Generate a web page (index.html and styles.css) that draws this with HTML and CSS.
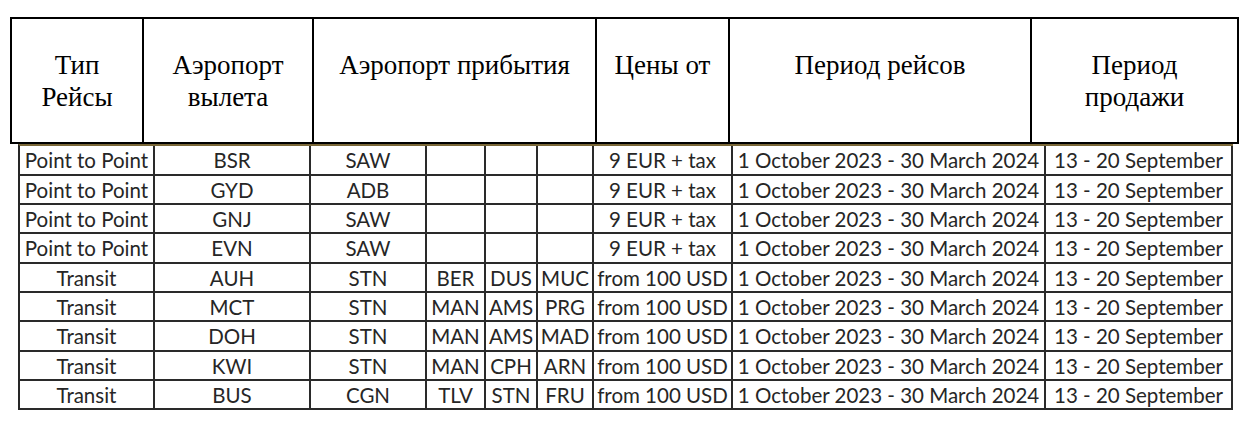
FILE: index.html
```html
<!DOCTYPE html>
<html lang="ru">
<head>
<meta charset="utf-8">
<title>Рейсы</title>
<link rel="stylesheet" href="styles.css">
</head>
<body>
<div class="sheet">
  <div class="head">
    <div class="hc">Тип<br>Рейсы</div>
    <div class="hc">Аэропорт<br>вылета</div>
    <div class="hc">Аэропорт прибытия</div>
    <div class="hc">Цены от</div>
    <div class="hc">Период рейсов</div>
    <div class="hc">Период<br>продажи</div>
  </div>
  <div class="grid">
    <div class="c">Point to Point</div><div class="c">BSR</div><div class="c">SAW</div><div class="c"></div><div class="c"></div><div class="c"></div><div class="c">9 EUR + tax</div><div class="c">1 October 2023 - 30 March 2024</div><div class="c">13 - 20 September</div>
    <div class="c">Point to Point</div><div class="c">GYD</div><div class="c">ADB</div><div class="c"></div><div class="c"></div><div class="c"></div><div class="c">9 EUR + tax</div><div class="c">1 October 2023 - 30 March 2024</div><div class="c">13 - 20 September</div>
    <div class="c">Point to Point</div><div class="c">GNJ</div><div class="c">SAW</div><div class="c"></div><div class="c"></div><div class="c"></div><div class="c">9 EUR + tax</div><div class="c">1 October 2023 - 30 March 2024</div><div class="c">13 - 20 September</div>
    <div class="c">Point to Point</div><div class="c">EVN</div><div class="c">SAW</div><div class="c"></div><div class="c"></div><div class="c"></div><div class="c">9 EUR + tax</div><div class="c">1 October 2023 - 30 March 2024</div><div class="c">13 - 20 September</div>
    <div class="c">Transit</div><div class="c">AUH</div><div class="c">STN</div><div class="c">BER</div><div class="c">DUS</div><div class="c">MUC</div><div class="c">from 100 USD</div><div class="c">1 October 2023 - 30 March 2024</div><div class="c">13 - 20 September</div>
    <div class="c">Transit</div><div class="c">MCT</div><div class="c">STN</div><div class="c">MAN</div><div class="c">AMS</div><div class="c">PRG</div><div class="c">from 100 USD</div><div class="c">1 October 2023 - 30 March 2024</div><div class="c">13 - 20 September</div>
    <div class="c">Transit</div><div class="c">DOH</div><div class="c">STN</div><div class="c">MAN</div><div class="c">AMS</div><div class="c">MAD</div><div class="c">from 100 USD</div><div class="c">1 October 2023 - 30 March 2024</div><div class="c">13 - 20 September</div>
    <div class="c">Transit</div><div class="c">KWI</div><div class="c">STN</div><div class="c">MAN</div><div class="c">CPH</div><div class="c">ARN</div><div class="c">from 100 USD</div><div class="c">1 October 2023 - 30 March 2024</div><div class="c">13 - 20 September</div>
    <div class="c">Transit</div><div class="c">BUS</div><div class="c">CGN</div><div class="c">TLV</div><div class="c">STN</div><div class="c">FRU</div><div class="c">from 100 USD</div><div class="c">1 October 2023 - 30 March 2024</div><div class="c">13 - 20 September</div>
  </div>
</div>
</body>
</html>
```
FILE: styles.css
```css
* { box-sizing: border-box; }
html, body { margin: 0; padding: 0; background: #fff; }
.sheet { padding-top: 17px; }
.head {
  margin-left: 10px;
  width: 1229px;
  height: 127px;
  border: 2px solid #000;
  display: grid;
  grid-template-columns: 132px 170px 283px 133px 302px 205px;
  font-family: "Liberation Serif", "Times New Roman", serif;
  font-size: 27px;
  line-height: 32px;
  color: #000;
}
.hc {
  border-right: 2px solid #000;
  text-align: center;
  padding-top: 30px;
}
.hc:last-child { border-right: none; }
.grid {
  margin-left: 18px;
  width: 1215px;
  display: grid;
  grid-template-columns: 135px 156px 116px 59px 52px 56px 139px 313px 187px;
  grid-template-rows: 30px 29px 29px 30px 29px 29px 30px 29px 29px;
  border-left: 2px solid #262626;
  border-top: 2px solid #7a6838;
  font-family: Lato, "Open Sans", sans-serif;
  font-size: 20.5px;
  color: #262626;
}
.c {
  border-right: 2px solid #2a2a2a;
  border-bottom: 2px solid #2a2a2a;
  display: flex;
  align-items: center;
  justify-content: center;
  white-space: nowrap;
  line-height: 1;
  padding-top: 1px;
}
```
